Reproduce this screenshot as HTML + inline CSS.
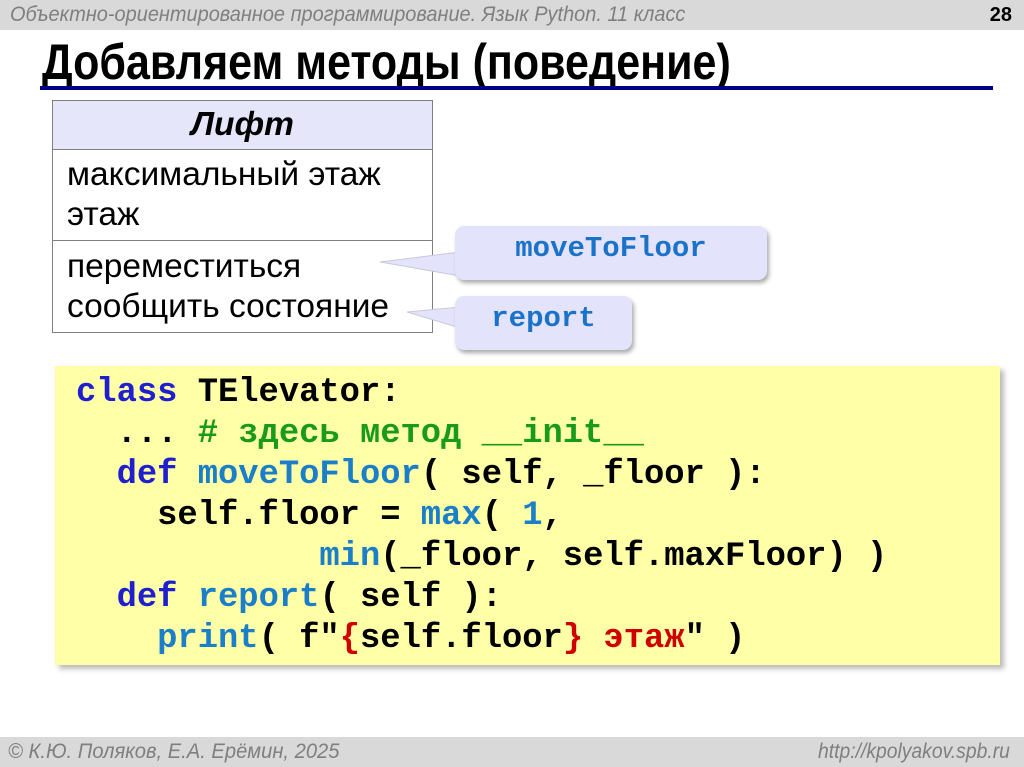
<!DOCTYPE html>
<html><head><meta charset="utf-8"><style>
body{margin:0;width:1024px;height:767px;position:relative;background:#fff;overflow:hidden;font-family:"Liberation Sans",sans-serif}
.bar{position:absolute;left:0;width:1024px;height:30px;background:#d9d9d9;color:#7f7f7f;font-style:italic;font-size:21px;line-height:30px}
.bar span{position:absolute;transform-origin:0 50%}
.title{position:absolute;left:42px;top:34px;font-weight:bold;font-size:50px;line-height:56px;transform:scaleX(0.86);transform-origin:0 0;white-space:nowrap}
.line{position:absolute;left:40px;top:86px;width:953px;height:4px;background:#000080}
table{position:absolute;left:52px;top:100px;width:381px;border-collapse:collapse;font-size:33.5px}
td{border:1.5px solid #808080;padding:0 14px;line-height:40px;white-space:nowrap}
.bub{position:absolute;background:#e3e3fb;border-radius:9px;box-shadow:2px 3px 4px #aaa;font-family:"Liberation Mono",monospace;font-weight:bold;color:#1a73c8;font-size:29px;text-align:center}
.code{position:absolute;left:55px;top:366px;width:945px;height:299px;background:#ffffa8;box-shadow:4px 4px 5px #bbb;font-family:"Liberation Mono",monospace;font-weight:bold;font-size:33.8px;line-height:41px;white-space:pre;padding-top:7px;box-sizing:border-box;padding-left:21px}
.k{color:#1f1fd0}.f{color:#1a7fc8}.c{color:#1a9a1a}.r{color:#d00000}
</style></head><body>
<div class="bar" style="top:0"><span style="left:10px;transform:scaleX(0.95)">Объектно-ориентированное программирование. Язык Python. 11 класс</span><span style="right:12px;font-style:normal;font-weight:bold;color:#000;font-size:20px">28</span></div>
<div class="title">Добавляем методы (поведение)</div>
<div class="line"></div>
<table>
<tr><td style="background:#e6e6fa;text-align:center;font-weight:bold;font-style:italic;height:48px">Лифт</td></tr>
<tr><td style="height:90px">максимальный этаж<br>этаж</td></tr>
<tr><td style="height:91px">переместиться<br>сообщить состояние</td></tr>
</table>
<svg style="position:absolute;left:0;top:0" width="1024" height="767">
<polygon points="380,262 460,252 460,276" fill="#e3e3fb" stroke="#c8c8dd"/>
<polygon points="407,312 460,307 460,328" fill="#e3e3fb" stroke="#c8c8dd"/>
</svg>
<div class="bub" style="left:455px;top:226px;width:312px;height:54px;line-height:46px">moveToFloor</div>
<div class="bub" style="left:455px;top:296px;width:177px;height:54px;line-height:46px">report</div>
<div class="code"><span class="k">class</span> TElevator:
  ... <span class="c"># здесь метод __init__</span>
  <span class="k">def</span> <span class="f">moveToFloor</span>( self, _floor ):
    self.floor = <span class="f">max</span>( <span class="f">1</span>,
            <span class="f">min</span>(_floor, self.maxFloor) )
  <span class="k">def</span> <span class="f">report</span>( self ):
    <span class="f">print</span>( f"<span class="r">{</span>self.floor<span class="r">}</span> <span class="r">этаж</span>" )</div>
<div class="bar" style="top:737px"><span style="left:8px;transform:scaleX(0.96)">© К.Ю. Поляков, Е.А. Ерёмин, 2025</span><span style="left:818px;transform:scaleX(0.92)">http://kpolyakov.spb.ru</span></div>
</body></html>
